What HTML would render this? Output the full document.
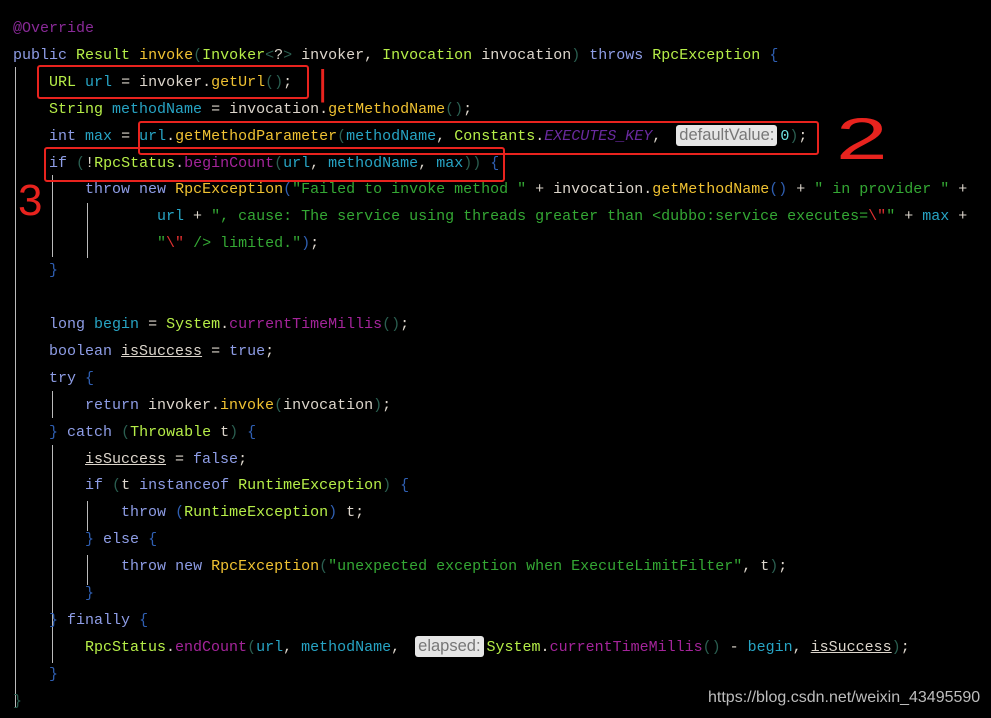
<!DOCTYPE html>
<html><head><meta charset="utf-8"><style>
html,body{margin:0;padding:0;background:#000;width:991px;height:718px;overflow:hidden;position:relative}
pre{position:absolute;left:13px;top:16px;margin:0;font-family:"Liberation Mono",monospace;font-size:15px;line-height:26.9px;color:#ddd6cc;letter-spacing:0}
.k{color:#8e9de6}.t{color:#b6ee48}.m{color:#f0c232}.s{color:#a4249a}.v{color:#27a4c4}.q{color:#34a834}
.b{color:#2f5fb2}.p{color:#2a5e50}.a{color:#8a2a98}.c{color:#6a2aa0;font-style:italic}.e{color:#e03030}.n{color:#6ee0e0}
.u{text-decoration:underline}
.badge{display:inline-block;background:#e6e6e6;color:#777;font-family:"Liberation Sans",sans-serif;font-size:16.5px;line-height:21px;padding:0 3px;border-radius:3px;margin:0 3px 0 6px}
.g{position:absolute;width:1px;background:#bbb}
.box{position:absolute;border:2px solid #e8231e;border-radius:3px}
.hw{position:absolute;color:#e8231e;font-family:"Liberation Sans",sans-serif;font-weight:300}
.wm{position:absolute;left:708px;top:689px;color:#bdbdbd;font-family:"Liberation Sans",sans-serif;font-size:16px}
</style></head><body>
<div class="g" style="left:15px;top:67px;height:640px"></div>
<div class="g" style="left:52px;top:175px;height:82px"></div>
<div class="g" style="left:87px;top:203px;height:55px"></div>
<div class="g" style="left:52px;top:391px;height:27px"></div>
<div class="g" style="left:52px;top:445px;height:215px"></div>
<div class="g" style="left:87px;top:501px;height:30px"></div>
<div class="g" style="left:87px;top:555px;height:30px"></div>
<div class="g" style="left:52px;top:637px;height:26px"></div>
<pre><span class="a">@Override</span>
<span class="k">public</span> <span class="t">Result</span> <span class="m">invoke</span><span class="p">(</span><span class="t">Invoker</span><span class="p">&lt;</span>?<span class="p">&gt;</span> invoker, <span class="t">Invocation</span> invocation<span class="p">)</span> <span class="k">throws</span> <span class="t">RpcException</span> <span class="b">{</span>
    <span class="t">URL</span> <span class="v">url</span> = invoker.<span class="m">getUrl</span><span class="p">()</span>;
    <span class="t">String</span> <span class="v">methodName</span> = invocation.<span class="m">getMethodName</span><span class="p">()</span>;
    <span class="k">int</span> <span class="v">max</span> = <span class="v">url</span>.<span class="m">getMethodParameter</span><span class="p">(</span><span class="v">methodName</span>, <span class="t">Constants</span>.<span class="c">EXECUTES_KEY</span>, <span class="badge">defaultValue:</span><span class="n">0</span><span class="p">)</span>;
    <span class="k">if</span> <span class="p">(</span>!<span class="t">RpcStatus</span>.<span class="s">beginCount</span><span class="p">(</span><span class="v">url</span>, <span class="v">methodName</span>, <span class="v">max</span><span class="p">))</span> <span class="b">{</span>
        <span class="k">throw</span> <span class="k">new</span> <span class="m">RpcException</span><span class="b">(</span><span class="q">"Failed to invoke method "</span> + invocation.<span class="m">getMethodName</span><span class="b">()</span> + <span class="q">" in provider "</span> +
                <span class="v">url</span> + <span class="q">", cause: The service using threads greater than &lt;dubbo:service executes=</span><span class="e">\"</span><span class="q">"</span> + <span class="v">max</span> +
                <span class="q">"</span><span class="e">\"</span><span class="q"> /&gt; limited."</span><span class="b">)</span>;
    <span class="b">}</span>

    <span class="k">long</span> <span class="v">begin</span> = <span class="t">System</span>.<span class="s">currentTimeMillis</span><span class="p">()</span>;
    <span class="k">boolean</span> <span class="u">isSuccess</span> = <span class="k">true</span>;
    <span class="k">try</span> <span class="b">{</span>
        <span class="k">return</span> invoker.<span class="m">invoke</span><span class="p">(</span>invocation<span class="p">)</span>;
    <span class="b">}</span> <span class="k">catch</span> <span class="p">(</span><span class="t">Throwable</span> t<span class="p">)</span> <span class="b">{</span>
        <span class="u">isSuccess</span> = <span class="k">false</span>;
        <span class="k">if</span> <span class="p">(</span>t <span class="k">instanceof</span> <span class="t">RuntimeException</span><span class="p">)</span> <span class="b">{</span>
            <span class="k">throw</span> <span class="b">(</span><span class="t">RuntimeException</span><span class="b">)</span> t;
        <span class="b">}</span> <span class="k">else</span> <span class="b">{</span>
            <span class="k">throw</span> <span class="k">new</span> <span class="m">RpcException</span><span class="p">(</span><span class="q">"unexpected exception when ExecuteLimitFilter"</span>, t<span class="p">)</span>;
        <span class="b">}</span>
    <span class="b">}</span> <span class="k">finally</span> <span class="b">{</span>
        <span class="t">RpcStatus</span>.<span class="s">endCount</span><span class="p">(</span><span class="v">url</span>, <span class="v">methodName</span>, <span class="badge">elapsed:</span><span class="t">System</span>.<span class="s">currentTimeMillis</span><span class="p">()</span> - <span class="v">begin</span>, <span class="u">isSuccess</span><span class="p">)</span>;
    <span class="b">}</span>
<span class="p">}</span></pre>
<div class="box" style="left:37px;top:65px;width:268px;height:30px"></div>
<div class="box" style="left:138px;top:121px;width:677px;height:30px"></div>
<div class="box" style="left:44px;top:147px;width:457px;height:31px"></div>
<div class="hw" style="left:318px;top:62px;font-size:36px">|</div>
<div class="hw" style="left:836px;top:106px;font-size:58px;transform:scaleX(1.6);transform-origin:left">2</div>
<div class="hw" style="left:18px;top:176px;font-size:44px">3</div>
<div class="wm">https://blog.csdn.net/weixin_43495590</div>
</body></html>
